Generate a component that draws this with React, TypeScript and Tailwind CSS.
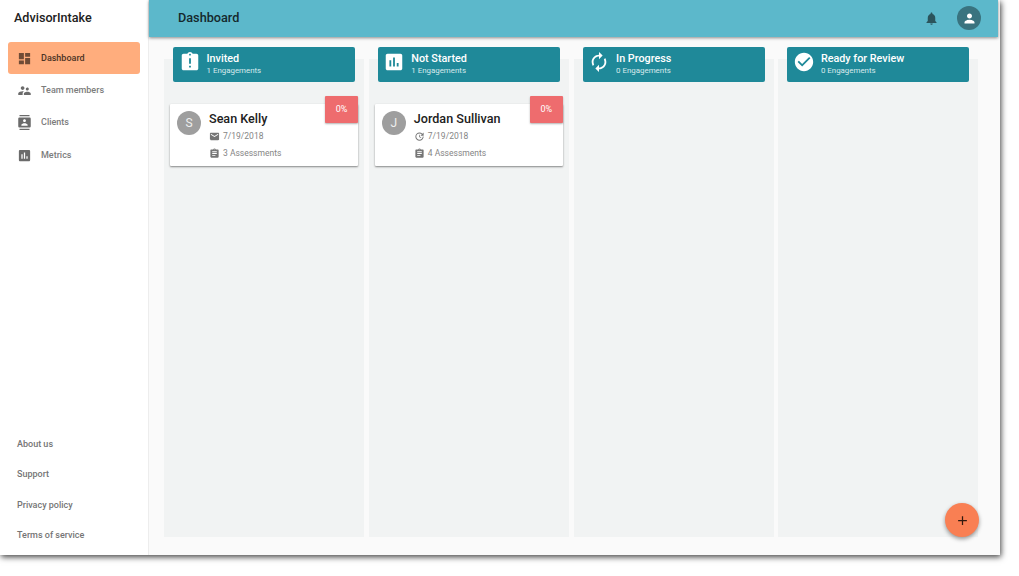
import React from 'react';
import type { IconType } from 'react-icons';
import {
  MdAdd,
  MdAssessment,
  MdAssignment,
  MdAssignmentLate,
  MdAutorenew,
  MdCheckCircle,
  MdContacts,
  MdDashboard,
  MdMail,
  MdNotifications,
  MdPerson,
  MdSupervisorAccount,
  MdUpdate,
} from 'react-icons/md';

interface Engagement {
  name: string;
  date: string;
  dateIcon: IconType;
  assessments: number;
  progress: number;
}

interface Column {
  title: string;
  icon: IconType;
  engagements: Engagement[];
}

const navItems = [
  { name: 'Dashboard', icon: MdDashboard },
  { name: 'Team members', icon: MdSupervisorAccount },
  { name: 'Clients', icon: MdContacts },
  { name: 'Metrics', icon: MdAssessment },
];

const footerLinks = ['About us', 'Support', 'Privacy policy', 'Terms of service'];

const columns: Column[] = [
  {
    title: 'Invited',
    icon: MdAssignmentLate,
    engagements: [
      { name: 'Sean Kelly', date: '7/19/2018', dateIcon: MdMail, assessments: 3, progress: 0 },
    ],
  },
  {
    title: 'Not Started',
    icon: MdAssessment,
    engagements: [
      { name: 'Jordan Sullivan', date: '7/19/2018', dateIcon: MdUpdate, assessments: 4, progress: 0 },
    ],
  },
  { title: 'In Progress', icon: MdAutorenew, engagements: [] },
  { title: 'Ready for Review', icon: MdCheckCircle, engagements: [] },
];

const Sidebar: React.FC<{ active: string }> = ({ active }) => (
  <aside className="flex w-[149px] shrink-0 flex-col border-r border-[#ededed] bg-white">
    <h1 className="pt-[9px] pl-[14px] text-[12.6px] leading-[18px] font-medium text-[#212121]">AdvisorIntake</h1>
    <nav className="mt-[15px] flex flex-col px-2">
      {navItems.map((item) => (
        <a
          key={item.name}
          className={`flex h-[32.3px] items-center gap-[9px] rounded-[3px] pl-[9px] text-[9px] font-medium ${
            item.name === active ? 'bg-[#ffad7d] text-[#4d3426]' : 'text-[#7c7c7c]'
          }`}
        >
          <item.icon size={15} className={item.name === active ? 'text-[#6f4b36]' : 'text-[#6b6b6b]'} />
          <span className="pt-px">{item.name}</span>
        </a>
      ))}
    </nav>
    <div className="mt-auto flex flex-col pb-1 pl-[17px]">
      {footerLinks.map((link) => (
        <a key={link} className="flex h-[30.5px] items-center text-[9px] font-medium text-[#757575]">
          {link}
        </a>
      ))}
    </div>
  </aside>
);

const TopBar: React.FC<{ title: string }> = ({ title }) => (
  <header className="z-10 mr-[2px] flex h-[37px] shrink-0 items-center bg-[#5cb8cb] pr-[17px] pb-px pl-[29px] shadow-[0_1px_3px_rgba(0,0,0,0.45)]">
    <h2 className="text-[12.7px] font-medium text-[#15292d]">{title}</h2>
    <MdNotifications size={15} className="mr-[18.5px] ml-auto text-[#2b545c]" />
    <div className="flex size-6 items-center justify-center rounded-full bg-[#39737f]">
      <MdPerson size={15} className="text-white" />
    </div>
  </header>
);

const EngagementCard: React.FC<{ engagement: Engagement }> = ({ engagement }) => (
  <article className="relative mt-[22px] -ml-[3px] flex h-[62px] w-[188px] gap-2 rounded-[1px] bg-white pt-[7px] pl-[7px] shadow-[0_1px_2px_rgba(0,0,0,0.45)]">
    <div className="flex size-6 shrink-0 items-center justify-center rounded-full bg-[#9e9e9e] text-[12px] text-[#eeeeee]">
      {engagement.name[0]}
    </div>
    <div className="text-[8.5px] text-[#858585]">
      <h4 className="mb-[2px] text-[12.6px] leading-[15px] font-medium text-[#212121]">{engagement.name}</h4>
      <p className="flex h-[17px] items-center gap-[3px]">
        <engagement.dateIcon size={11} className="text-[#757575]" />
        {engagement.date}
      </p>
      <p className="flex h-[17px] items-center gap-[3px]">
        <MdAssignment size={11} className="text-[#757575]" />
        {engagement.assessments} Assessments
      </p>
    </div>
    <span className="absolute -top-2 right-0 flex h-[27px] w-[33px] items-center justify-center rounded-[1px] bg-[#ee6c6e] text-[9px] text-white shadow-[0_1px_2px_rgba(0,0,0,0.3)]">
      {engagement.progress}%
    </span>
  </article>
);

const BoardColumn: React.FC<{ column: Column }> = ({ column }) => (
  <section className="flex w-[200px] flex-col bg-[#f1f3f3] pl-[9px]">
    <div className="-mt-3 flex h-[35px] w-[182px] shrink-0 items-start gap-[6px] rounded-[2px] bg-[#1f8999] pt-1 pl-[5.5px] text-white">
      <column.icon size={22} />
      <div className="pt-px">
        <h3 className="text-[10.8px] leading-[13px] font-medium">{column.title}</h3>
        <p className="text-[7.9px] leading-[11px] text-[#d8eaed]">{column.engagements.length} Engagements</p>
      </div>
    </div>
    {column.engagements.map((engagement) => (
      <EngagementCard key={engagement.name} engagement={engagement} />
    ))}
  </section>
);

const App: React.FC = () => (
  <div className="h-[576px] w-[1019px] overflow-hidden bg-white font-['Roboto',sans-serif]">
    <div className="relative flex h-[555px] w-[1000px] bg-[#fafafa] shadow-[1px_2px_6px_rgba(0,0,0,0.75)]">
      <Sidebar active="Dashboard" />
      <div className="flex flex-1 flex-col">
        <TopBar title="Dashboard" />
        <main className="flex flex-1 gap-[4.8px] pt-[22px] pb-[18px] pl-[15px]">
          {columns.map((column) => (
            <BoardColumn key={column.title} column={column} />
          ))}
        </main>
      </div>
      <button className="absolute right-[21px] bottom-[18px] flex size-[34px] items-center justify-center rounded-full bg-[#f97f53] text-[#32190f] shadow-[0_2px_4px_rgba(0,0,0,0.4)]">
        <MdAdd size={15} />
      </button>
    </div>
  </div>
);

export default App;
